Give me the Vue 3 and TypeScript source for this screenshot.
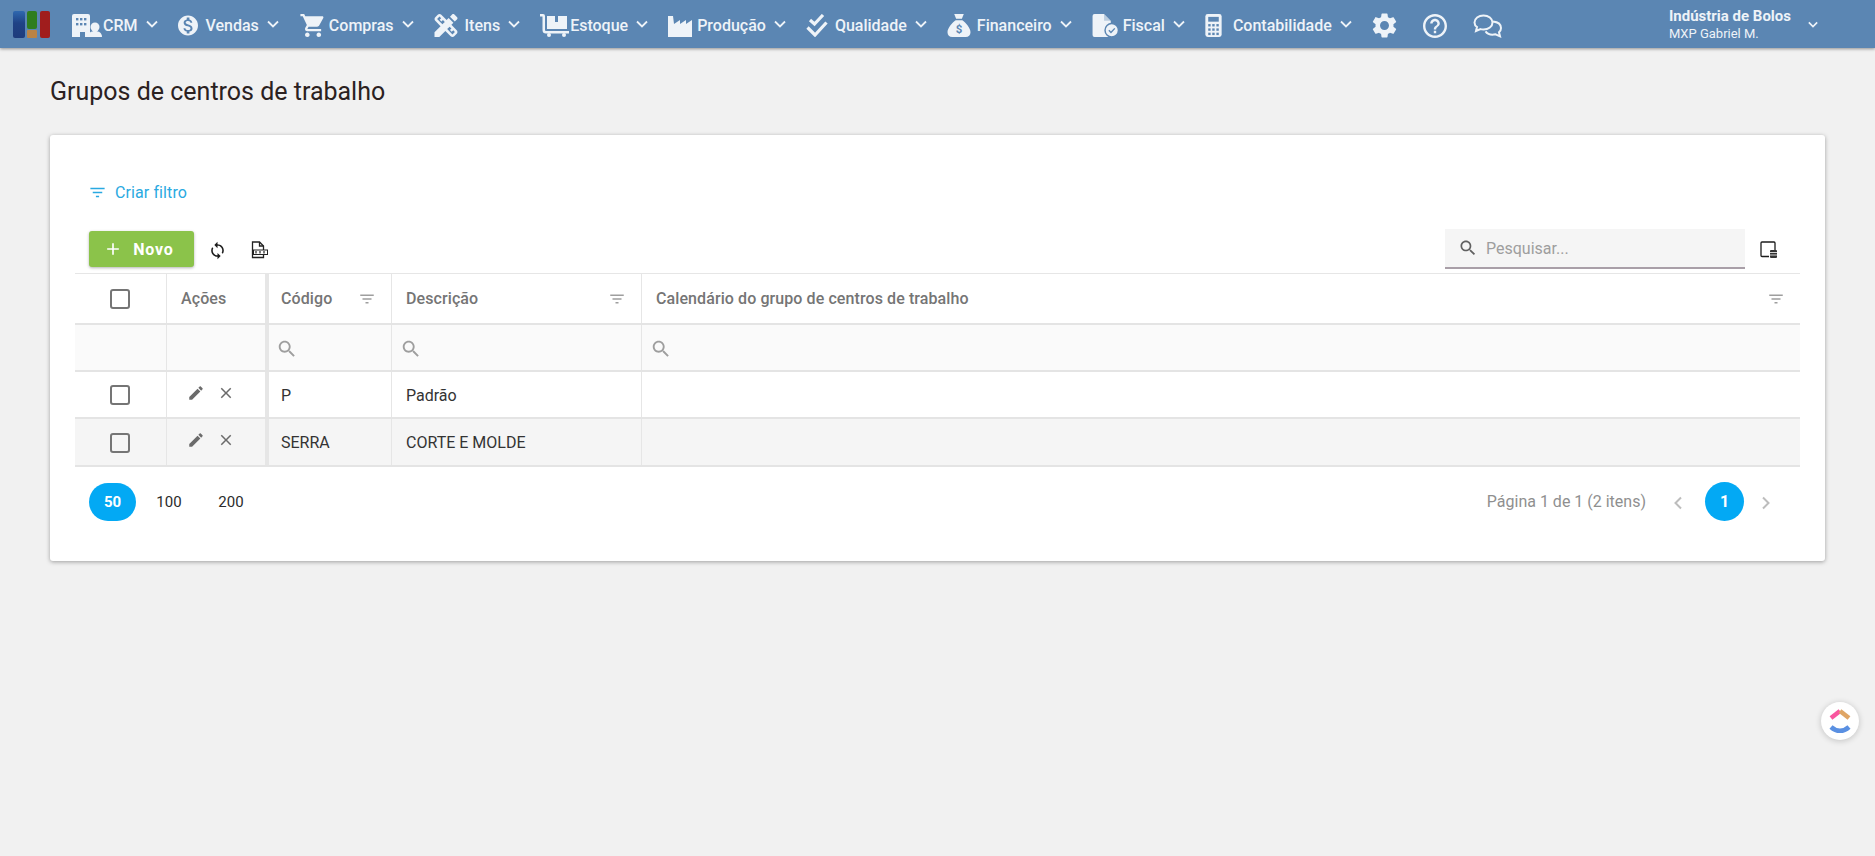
<script setup lang="ts">
interface NavItem { label: string; w: number; gap: number; vb: string; key: string }
const navItems: NavItem[] = [
  { label: 'CRM', key: 'crm', w: 30, gap: 1, vb: '0 0 30 23' },
  { label: 'Vendas', key: 'vendas', w: 20, gap: 8, vb: '2 2 20 20' },
  { label: 'Compras', key: 'compras', w: 27, gap: 3, vb: '1 2 21 20' },
  { label: 'Itens', key: 'itens', w: 24, gap: 7, vb: '3 3 18 18' },
  { label: 'Estoque', key: 'estoque', w: 29, gap: 1, vb: '0 0 29 23' },
  { label: 'Produção', key: 'producao', w: 24, gap: 5, vb: '0 0 24 23' },
  { label: 'Qualidade', key: 'qualidade', w: 22, gap: 7, vb: '0 0 22 23' },
  { label: 'Financeiro', key: 'financeiro', w: 24, gap: 6, vb: '0 0 24 24' },
  { label: 'Fiscal', key: 'fiscal', w: 27, gap: 4, vb: '0 0 27 24' },
  { label: 'Contabilidade', key: 'contabilidade', w: 17, gap: 11, vb: '0 0 17 24' },
]
const rows = [
  { code: 'P', desc: 'Padrão' },
  { code: 'SERRA', desc: 'CORTE E MOLDE' },
]
const searchPath = 'M15.5 14h-.79l-.28-.27C15.41 12.59 16 11.11 16 9.5 16 5.91 13.09 3 9.5 3S3 5.91 3 9.5 5.91 16 9.5 16c1.61 0 3.09-.59 4.23-1.57l.27.28v.79l5 4.99L20.49 19l-4.99-5zm-6 0C7.01 14 5 11.99 5 9.5S7.01 5 9.5 5 14 7.01 14 9.5 11.99 14 9.5 14z'
const filterPath = 'M10 18h4v-2h-4v2zM3 6v2h18V6H3zm3 7h12v-2H6v2z'
</script>

<template>
  <div class="page">
    <header class="nav">
      <svg class="logo" width="37" height="27" viewBox="0 0 37 27">
        <defs>
          <linearGradient id="logoBlue" x1="0" y1="0" x2="0" y2="1">
            <stop offset="0" stop-color="#2f68b0" />
            <stop offset=".45" stop-color="#1f4285" />
            <stop offset="1" stop-color="#1e3c7c" />
          </linearGradient>
        </defs>
        <rect x="0" y="0" width="12" height="27" rx="2" fill="url(#logoBlue)" />
        <rect x="14" y="0" width="10" height="18" rx="2" fill="#2f7d1e" />
        <rect x="14" y="19" width="10" height="8" rx="1" fill="#b98345" />
        <rect x="27" y="0" width="10" height="27" rx="2" fill="#a01d1d" />
      </svg>
      <div v-for="item in navItems" :key="item.key" class="nav-item">
        <span class="nav-lead" :style="{ gap: item.gap + 'px' }">
          <svg :width="item.w" height="23" :viewBox="item.vb" class="nav-icon" fill="#eef3f8">
            <template v-if="item.key === 'crm'">
              <path d="M0 2a2 2 0 0 1 2-2h14a2 2 0 0 1 2 2v21h-5v-5H8v5H0z" />
              <g fill="#5b86b3">
                <rect x="4" y="4" width="2.4" height="2.4" /><rect x="8" y="4" width="2.4" height="2.4" /><rect x="12" y="4" width="2.4" height="2.4" />
                <rect x="4" y="9" width="2.4" height="2.4" /><rect x="8" y="9" width="2.4" height="2.4" /><rect x="12" y="9" width="2.4" height="2.4" />
              </g>
              <circle cx="23" cy="13" r="4.5" />
              <path d="M16 23c0-4 3-6 7-6s7 2 7 6z" />
            </template>
            <path v-else-if="item.key === 'vendas'" d="M12 2C6.48 2 2 6.48 2 12s4.48 10 10 10 10-4.48 10-10S17.52 2 12 2zm1.41 16.09V20h-2.67v-1.93c-1.71-.36-3.16-1.46-3.27-3.4h1.96c.1 1.05.82 1.87 2.65 1.87 1.96 0 2.4-.98 2.4-1.59 0-.83-.44-1.61-2.67-2.14-2.48-.6-4.18-1.62-4.18-3.67 0-1.72 1.39-2.84 3.11-3.21V4h2.67v1.95c1.86.45 2.79 1.86 2.85 3.39H14.3c-.05-1.11-.64-1.87-2.22-1.87-1.5 0-2.4.68-2.4 1.64 0 .84.65 1.39 2.67 1.91s4.18 1.39 4.18 3.91c-.01 1.83-1.38 2.83-3.12 3.16z" />
            <path v-else-if="item.key === 'compras'" d="M7 18c-1.1 0-1.99.9-1.99 2S5.9 22 7 22s2-.9 2-2-.9-2-2-2zM1 2v2h2l3.6 7.59-1.35 2.45c-.16.28-.25.61-.25.96 0 1.1.9 2 2 2h12v-2H7.42c-.14 0-.25-.11-.25-.25l.03-.12.9-1.63h7.45c.75 0 1.41-.41 1.75-1.03l3.58-6.49c.08-.14.12-.31.12-.48 0-.55-.45-1-1-1H5.21l-.94-2H1zm16 16c-1.1 0-1.99.9-1.99 2s.89 2 1.99 2 2-.9 2-2-.9-2-2-2z" />
            <path v-else-if="item.key === 'itens'" d="M16.24 11.51l1.57-1.57-3.75-3.75-1.57 1.57-4.14-4.13c-.78-.78-2.05-.78-2.83 0l-1.9 1.9c-.78.78-.78 2.05 0 2.83l4.13 4.13L3 17.25V21h3.75l4.76-4.76 4.13 4.13c.95.95 2.23.6 2.83 0l1.9-1.9c.78-.78.78-2.05 0-2.83l-4.13-4.13zm-7.06-.44L5.04 6.94l1.89-1.9L8.2 6.31 7.02 7.5l1.41 1.41 1.19-1.19 1.45 1.45-1.89 1.9zm7.88 7.89l-4.13-4.14 1.9-1.9 1.45 1.45-1.19 1.19 1.41 1.41 1.19-1.19 1.27 1.27-1.9 1.91zM20.71 7.04c.39-.39.39-1.02 0-1.41l-2.34-2.34c-.47-.47-1.12-.29-1.41 0l-1.83 1.83 3.75 3.75 1.83-1.83z" />
            <template v-else-if="item.key === 'estoque'">
              <path d="M0 0h3a2 2 0 0 1 2 2v14a1 1 0 0 0 1 1h23v2.5H6A3.5 3.5 0 0 1 2.5 16V2.5H0z" />
              <path d="M7 2h8v6h3V2h9v13H7z" />
              <circle cx="9" cy="21" r="2" /><circle cx="24" cy="21" r="2" />
            </template>
            <path v-else-if="item.key === 'producao'" d="M0 2h5l1 8 6-4v4l6-4v4l6-4v17H0z" />
            <g v-else-if="item.key === 'qualidade'" fill="none" stroke="#eef3f8" stroke-width="3.2">
              <path d="M4 6l4.5 4L17 1" /><path d="M1.5 13.5L9 21 20.5 8.5" />
            </g>
            <template v-else-if="item.key === 'financeiro'">
              <path d="M7 0h10l-2 5H9zM8.500 6.500h7C19 9 24 14.500 24 19c0 3-2 5-5 5H5c-3 0-5-2-5-5 0-4.500 5-10 8.500-12.500z" />
              <text x="12" y="20" text-anchor="middle" font-family="Roboto, sans-serif" font-size="12" font-weight="700" fill="#5b86b3">$</text>
            </template>
            <template v-else-if="item.key === 'fiscal'">
              <path d="M2 0h10l7 7v15a2 2 0 0 1-2 2H2a2 2 0 0 1-2-2V2a2 2 0 0 1 2-2z" />
              <path d="M12 0v7h7z" fill="#5b86b3" opacity=".35" />
              <circle cx="20" cy="17" r="7" fill="#eef3f8" stroke="#5b86b3" stroke-width="1.5" />
              <path d="M17 17l2.200 2.200L23.200 15" fill="none" stroke="#5b86b3" stroke-width="1.500" />
            </template>
            <template v-else>
              <rect x="0" y="0" width="17" height="24" rx="2.500" />
              <g fill="#5b86b3">
                <rect x="3" y="3" width="11" height="5" />
                <rect x="3" y="10.500" width="2.500" height="2.500" /><rect x="7.200" y="10.500" width="2.500" height="2.500" /><rect x="11.500" y="10.500" width="2.500" height="2.500" />
                <rect x="3" y="15" width="2.500" height="2.500" /><rect x="7.200" y="15" width="2.500" height="2.500" /><rect x="11.500" y="15" width="2.500" height="2.500" />
                <rect x="3" y="19.500" width="2.500" height="2.500" /><rect x="7.200" y="19.500" width="2.500" height="2.500" /><rect x="11.500" y="19.500" width="2.500" height="2.500" />
              </g>
            </template>
          </svg>
          <span class="nav-label">{{ item.label }}</span>
        </span>
        <svg class="chev" width="12" height="8" viewBox="0 0 12 8"><path d="M1 1.500l5 5 5-5" fill="none" stroke="#eef3f8" stroke-width="1.800" /></svg>
      </div>
      <svg class="tool" width="25" height="25" viewBox="2 2 20 20" fill="#eef3f8"><path d="M19.14 12.94c.04-.3.06-.61.06-.94 0-.32-.02-.64-.07-.94l2.03-1.58c.18-.14.23-.41.12-.61l-1.92-3.32c-.12-.22-.37-.29-.59-.22l-2.39.96c-.5-.38-1.03-.7-1.62-.94l-.36-2.54c-.04-.24-.24-.41-.48-.41h-3.84c-.24 0-.43.17-.47.41l-.36 2.54c-.59.24-1.13.57-1.62.94l-2.39-.96c-.22-.08-.47 0-.59.22L2.74 8.87c-.12.21-.08.47.12.61l2.03 1.58c-.05.3-.09.63-.09.94s.02.64.07.94l-2.03 1.58c-.18.14-.23.41-.12.61l1.92 3.32c.12.22.37.29.59.22l2.39-.96c.5.38 1.03.7 1.62.94l.36 2.54c.05.24.24.41.48.41h3.84c.24 0 .44-.17.47-.41l.36-2.54c.59-.24 1.13-.56 1.62-.94l2.39.96c.22.08.47 0 .59-.22l1.92-3.32c.12-.22.07-.47-.12-.61l-2.01-1.58zM12 15.6c-1.98 0-3.6-1.62-3.6-3.6s1.62-3.6 3.6-3.6 3.6 1.62 3.6 3.6-1.62 3.6-3.6 3.6z" /></svg>
      <svg class="tool" width="24" height="24" viewBox="2 2 20 20" fill="#eef3f8"><path d="M11 18h2v-2h-2v2zm1-16C6.48 2 2 6.48 2 12s4.48 10 10 10 10-4.48 10-10S17.52 2 12 2zm0 18c-4.41 0-8-3.59-8-8s3.59-8 8-8 8 3.59 8 8-3.59 8-8 8zm0-14c-2.21 0-4 1.79-4 4h2c0-1.1.9-2 2-2s2 .9 2 2c0 2-3 1.75-3 5h2c0-2.25 3-2.5 3-5 0-2.21-1.79-4-4-4z" /></svg>
      <svg class="tool" width="30" height="24" viewBox="0 0 30 24" fill="none" stroke="#eef3f8" stroke-width="2"><path d="M10.500 1.500c5 0 9 3 9 7s-4 7-9 7c-1 0-2-.1-3-.4L3 17l1-4C2.500 12 1.500 10.300 1.500 8.500c0-4 4-7 9-7z" /><path d="M20 7.500c4.500.5 8 2.700 8 6.500 0 1.800-.8 3.200-2 4.300l1 4-4.500-2c-4 .9-8-.3-10-3" /></svg>
      <div class="user">
        <div class="user-text">
          <span class="user-company">Indústria de Bolos</span>
          <span class="user-name">MXP Gabriel M.</span>
        </div>
        <svg class="chev" width="10" height="7" viewBox="0 0 12 8"><path d="M1 1.500l5 5 5-5" fill="none" stroke="#eef3f8" stroke-width="2" /></svg>
      </div>
    </header>

    <main class="content">
      <h1 class="title">Grupos de centros de trabalho</h1>
      <section class="card">
        <div class="filter-link">
          <svg width="19" height="19" viewBox="0 0 24 24" fill="#29a9e1"><path :d="filterPath" /></svg>
          <span>Criar filtro</span>
        </div>
        <div class="toolbar">
          <button class="btn-new">
            <svg width="20" height="20" viewBox="0 0 24 24" fill="#fff"><path d="M19 13h-6v6h-2v-6H5v-2h6V5h2v6h6v2z" /></svg>
            <span>Novo</span>
          </button>
          <svg class="tb-icon sync" width="19" height="19" viewBox="0 0 24 24" fill="#1c1c1c"><path d="M12 4V1L8 5l4 4V6c3.31 0 6 2.69 6 6 0 1.01-.25 1.97-.7 2.8l1.46 1.46C19.54 15.03 20 13.57 20 12c0-4.42-3.58-8-8-8zm0 14c-3.31 0-6-2.69-6-6 0-1.01.25-1.97.7-2.8L5.24 7.74C4.46 8.97 4 10.43 4 12c0 4.42 3.58 8 8 8v3l4-4-4-4v3z" /></svg>
          <svg class="tb-icon doc" width="18" height="18" viewBox="0 0 18 18" fill="none" stroke="#222" stroke-width="1.300">
            <path d="M1.500 1h7l4 4v11.500h-11z" /><path d="M8.500 1v4h4" />
            <rect x="2.500" y="9" width="14" height="4.500" fill="#fff" stroke-width="1" />
            <path d="M5 10v2.500M9 10v2.500M13 10v2.500" stroke-width="1.200" />
          </svg>
          <div class="search">
            <svg width="20" height="20" viewBox="0 0 24 24" fill="#616161"><path :d="searchPath" /></svg>
            <span>Pesquisar...</span>
          </div>
          <svg class="tb-icon cols" width="18" height="18" viewBox="0 0 18 18" fill="none" stroke="#1c1c1c" stroke-width="1.300">
            <path d="M9 15.500H2a1 1 0 0 1-1-1V2a1 1 0 0 1 1-1h12a1 1 0 0 1 1 1v7" />
            <rect x="10" y="9" width="7" height="8" rx="1" fill="#333" stroke="none" />
            <path d="M10 11.500h7M10 14h7" stroke="#fff" stroke-width=".8" />
          </svg>
        </div>

        <div class="table">
          <div class="row head">
            <div class="cell c-check"><span class="check"></span></div>
            <div class="cell c-act">Ações</div>
            <div class="cell c-thick">Código<svg width="18" height="18" viewBox="0 0 24 24" fill="#9e9e9e"><path :d="filterPath" /></svg></div>
            <div class="cell">Descrição<svg width="18" height="18" viewBox="0 0 24 24" fill="#9e9e9e"><path :d="filterPath" /></svg></div>
            <div class="cell">Calendário do grupo de centros de trabalho<svg width="18" height="18" viewBox="0 0 24 24" fill="#9e9e9e"><path :d="filterPath" /></svg></div>
          </div>
          <div class="row filters">
            <div class="cell"></div>
            <div class="cell"></div>
            <div class="cell c-thick"><svg width="22" height="22" viewBox="0 0 24 24" fill="#9e9e9e"><path :d="searchPath" /></svg></div>
            <div class="cell"><svg width="22" height="22" viewBox="0 0 24 24" fill="#9e9e9e"><path :d="searchPath" /></svg></div>
            <div class="cell"><svg width="22" height="22" viewBox="0 0 24 24" fill="#9e9e9e"><path :d="searchPath" /></svg></div>
          </div>
          <div v-for="r in rows" :key="r.code" class="row body">
            <div class="cell c-check"><span class="check"></span></div>
            <div class="cell c-actions">
              <svg width="18" height="18" viewBox="0 0 24 24" fill="#6b6b6b"><path d="M3 17.250V21h3.750L17.810 9.940l-3.750-3.750L3 17.250zM20.710 7.040c.39-.39.39-1.020 0-1.410l-2.340-2.340c-.39-.39-1.020-.39-1.410 0l-1.830 1.830 3.750 3.750 1.830-1.830z" /></svg>
              <svg width="18" height="18" viewBox="0 0 24 24" fill="#6b6b6b"><path d="M19 6.410L17.590 5 12 10.590 6.410 5 5 6.410 10.590 12 5 17.590 6.410 19 12 13.410 17.590 19 19 17.590 13.410 12z" /></svg>
            </div>
            <div class="cell c-thick">{{ r.code }}</div>
            <div class="cell">{{ r.desc }}</div>
            <div class="cell"></div>
          </div>
        </div>

        <footer class="pager">
          <div class="sizes">
            <span class="size active">50</span>
            <span class="size">100</span>
            <span class="size">200</span>
          </div>
          <div class="pages">
            <span class="page-info">Página 1 de 1 (2 itens)</span>
            <svg class="page-chev" width="10" height="14" viewBox="0 0 10 14"><path d="M8 1.500L2.500 7 8 12.500" fill="none" stroke="#bdbdbd" stroke-width="2" /></svg>
            <span class="page-num">1</span>
            <svg class="page-chev" width="10" height="14" viewBox="0 0 10 14"><path d="M2 1.500L7.500 7 2 12.500" fill="none" stroke="#bdbdbd" stroke-width="2" /></svg>
          </div>
        </footer>
      </section>
    </main>

    <div class="clickup">
      <svg width="22" height="26" viewBox="0 0 22 26" fill="none" stroke-width="4.500" stroke-linejoin="round">
        <path d="M2 10l9-7" stroke="#f9569f" />
        <path d="M11 3l9 7" stroke="#dfa565" />
        <path d="M2 19c3 2.800 5.500 3.800 9 3.800s6-1 9-3.800" stroke="#5a90e2" />
      </svg>
    </div>
  </div>
</template>

<style>
html, body { margin: 0; background: #f1f1f1; }
</style>

<style scoped>
.page {
  position: relative;
  min-height: 856px;
  background: #f1f1f1;
  font-family: Roboto, "Liberation Sans", sans-serif;
  color: #2b2b2b;
  overflow: hidden;
}
.nav {
  display: flex;
  align-items: center;
  height: 48px;
  padding-left: 13px;
  background: #5b86b3;
  box-shadow: 0 1px 3px rgba(0, 0, 0, .4);
  color: #eef3f8;
}
.logo { margin-right: 22px; flex: none; }
.nav-item { display: flex; align-items: center; margin-right: 20px; }
.nav-lead { display: flex; align-items: center; }
.nav-icon { display: block; margin-top: 3px; }
.nav-label { font-size: 16px; font-weight: 500; white-space: nowrap; margin-top: 2px; }
.chev { margin-left: 8px; flex: none; }
.tool { flex: none; margin-right: 26px; margin-top: 3px; }
.user { display: flex; align-items: center; margin-left: auto; padding-right: 57px; }
.user-text { display: flex; flex-direction: column; margin-right: 9px; margin-top: 1px; }
.user-company { font-size: 15px; font-weight: 700; line-height: 17px; }
.user-name { font-size: 13px; line-height: 17px; }

.content { padding: 28px 50px 0 50px; }
.title { margin: 0 0 27px; font-size: 25px; font-weight: 400; line-height: 32px; color: #2b2121; }
.card {
  background: #fff;
  border-radius: 3px;
  height: 426px;
  box-shadow: 0 1px 4px rgba(0, 0, 0, .35);
  padding: 46px 25px 0 25px;
  box-sizing: border-box;
}
.filter-link { display: flex; align-items: center; gap: 8px; padding-left: 13px; color: #29a9e1; font-size: 16px; letter-spacing: .1px; height: 22px; }
.toolbar { display: flex; align-items: center; padding-left: 14px; height: 42px; margin-top: 25px; margin-bottom: 3px; }
.btn-new {
  display: flex;
  align-items: center;
  justify-content: center;
  gap: 10px;
  width: 105px;
  height: 36px;
  padding: 0 6px 0 0;
  border: 0;
  border-radius: 3px;
  background: #8bc34a;
  box-shadow: 0 1px 3px rgba(0, 0, 0, .3);
  color: #fff;
  font: 700 16px Roboto, sans-serif;
  letter-spacing: .8px;
}
.tb-icon { flex: none; margin-top: 2px; }
.sync { margin-left: 14px; }
.doc { margin-left: 24px; }
.search {
  display: flex;
  align-items: center;
  gap: 8px;
  margin-left: auto;
  width: 300px;
  height: 40px;
  padding-left: 13px;
  box-sizing: border-box;
  background: #f5f5f5;
  border-bottom: 2px solid #a99fa8;
  color: #9e9e9e;
  font-size: 16px;
}
.cols { margin-left: 15px; margin-right: 22px; }

.table { border-top: 1px solid #e6e6e6; }
.row {
  display: grid;
  grid-template-columns: 92px 99px 126px 250px 1158px;
  border-bottom: 2px solid #e4e4e4;
  box-sizing: border-box;
}
.cell {
  display: flex;
  align-items: center;
  padding: 0 15px 0 14px;
  border-right: 1px solid #e6e6e6;
  box-sizing: border-box;
  min-width: 0;
  white-space: nowrap;
}
.cell:last-child { border-right: 0; }
.c-thick { border-left: 3px solid #e6e6e6; padding-left: 12px; }
.c-act { padding-left: 14px; }
.head { height: 51px; font-size: 16px; font-weight: 500; color: #757575; letter-spacing: .09px; }
.head .cell { justify-content: space-between; }
.c-check { padding: 0 2px 0 0; }
.head .c-check, .body .c-check { justify-content: center; }
.filters { height: 47px; background: #fafafa; }
.filters .cell { padding-left: 8px; padding-top: 2px; }
.filters .c-thick { padding-left: 7px; }
.body { height: 47px; font-size: 16px; color: #333; }
.body .cell { padding-top: 1px; }
.body:last-child { height: 48px; background: #f5f5f5; }
.body .c-actions { gap: 12px; padding-left: 20px; padding-bottom: 4px; padding-top: 0; }
.check { display: block; width: 20px; height: 20px; box-sizing: border-box; border: 2px solid #757575; border-radius: 3px; background: #fff; }
.body:last-child .check { background: #f5f5f5; }

.pager { display: flex; justify-content: space-between; align-items: center; padding: 15px 0 0 14px; }
.sizes { display: flex; align-items: center; font-size: 15px; }
.size { width: 62px; text-align: center; line-height: 38px; }
.size.active { width: 47px; margin-right: 2px; border-radius: 19px; background: #03a9f4; color: #fff; font-weight: 700; }
.pages { display: flex; align-items: center; margin-right: 29px; font-size: 16px; color: #8f8f8f; }
.page-info { margin-right: 27px; }
.page-chev { margin-top: 3px; }
.page-num { width: 39px; height: 39px; border-radius: 50%; margin: 0 17px 0 22px; background: #03a9f4; color: #fff; font-weight: 700; text-align: center; line-height: 39px; }

.clickup {
  position: absolute;
  left: 1821px;
  top: 702px;
  width: 38px;
  height: 38px;
  border-radius: 50%;
  background: #fff;
  box-shadow: 0 1px 6px rgba(0, 0, 0, .2);
  display: flex;
  align-items: center;
  justify-content: center;
}
</style>
